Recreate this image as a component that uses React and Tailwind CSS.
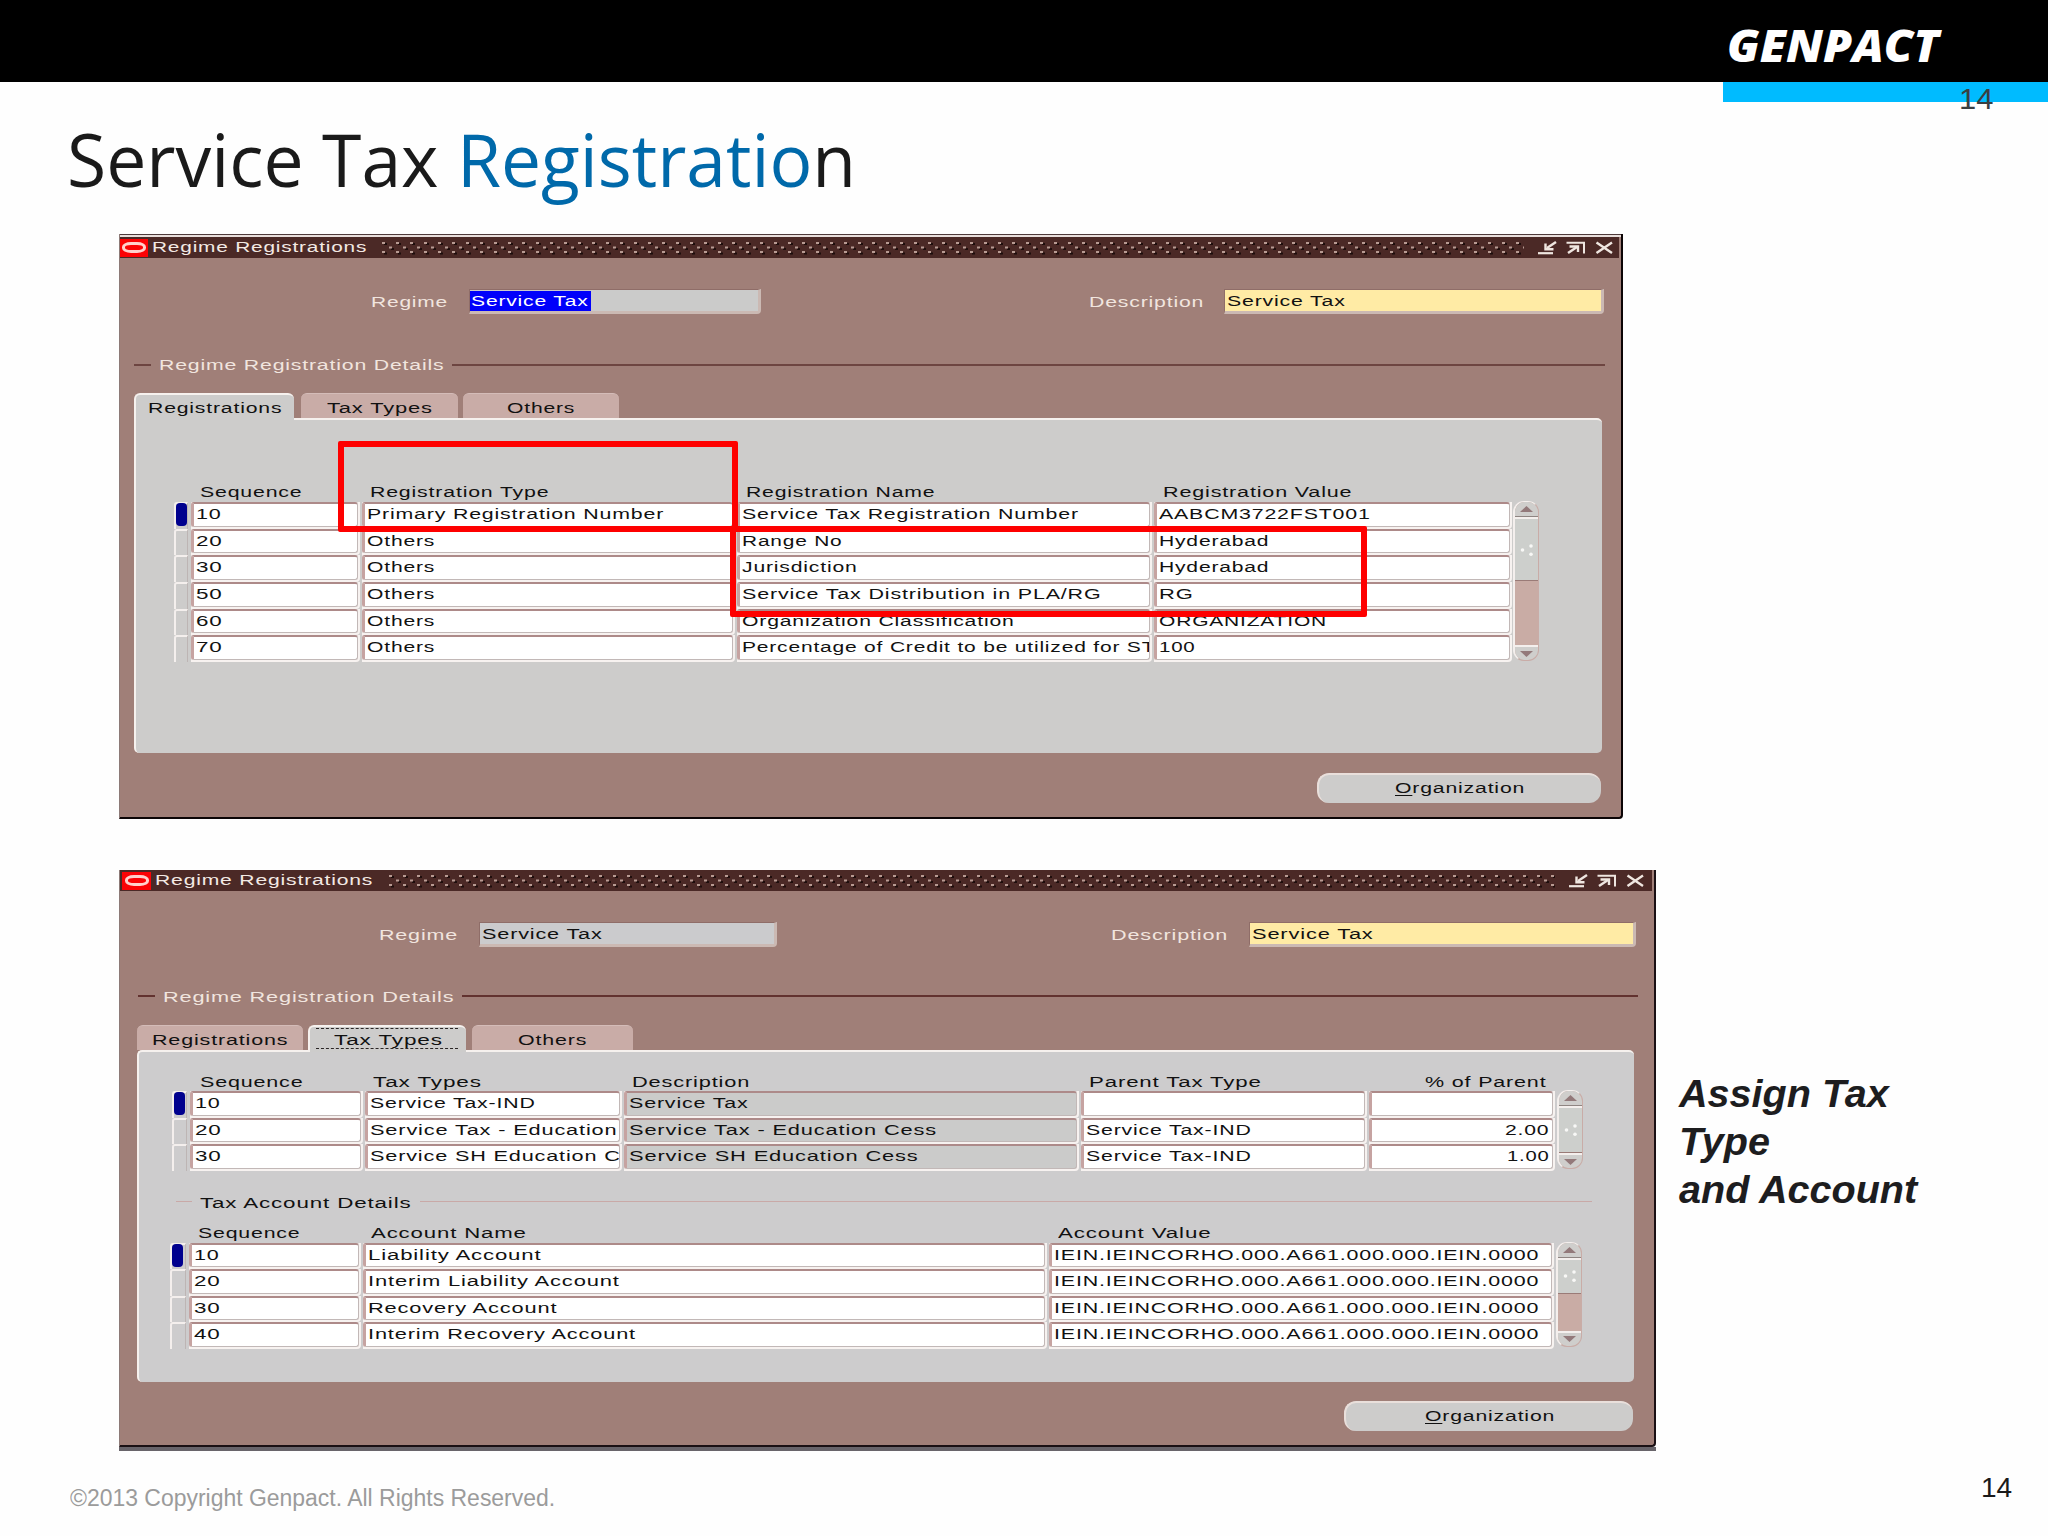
import React, { useLayoutEffect, useRef, useState } from 'react';

// Text stretched horizontally so that it fills exactly w pixels
const Fit = ({ w, origin = 'left', className = '', children }) => {
  const ref = useRef(null);
  const [scale, setScale] = useState(1);

  useLayoutEffect(() => {
    setScale(w / ref.current.offsetWidth);
  }, [w]);

  return (
    <span className="inline-block whitespace-pre align-top shrink-0" style={{ width: w }}>
      <span
        ref={ref}
        className={`inline-block whitespace-pre align-top ${className}`}
        style={{ transform: `scaleX(${scale})`, transformOrigin: origin }}
      >
        {children}
      </span>
    </span>
  );
};

const Label = ({ w, className = '', children }) => (
  <Fit w={w} className={`tracking-[0.6px] ${className}`}>{children}</Fit>
);

const TitleBar = ({ id, textWidth, className, iconClass, dotsClass }) => (
  <div className={`flex items-center h-[21px] bg-[#4b2926] ${className}`}>
    <div className={`h-[18px] bg-[#fb0205] flex items-center justify-center ${iconClass}`}>
      <div className="w-[24px] h-[11px] rounded-[9px/5px] border-[3px] border-[#ffd0cc]" />
    </div>
    <div className="ml-1 text-[#f3e9e4] leading-[20px] h-[21px]">
      <Label w={textWidth}>Regime Registrations</Label>
    </div>
    <svg className={`h-[14px] ${dotsClass}`}>
      <defs>
        <pattern id={id} width="14" height="14" patternUnits="userSpaceOnUse">
          <rect x="2" y="2" width="3" height="2" fill="#1e0d0c" />
          <rect x="9" y="7" width="3" height="2" fill="#1e0d0c" />
          <rect x="2" y="11.5" width="3" height="2" fill="#1e0d0c" />
          <rect x="0" y="1" width="3" height="2" fill="#b89b93" />
          <rect x="7" y="5.5" width="3" height="2" fill="#b89b93" />
          <rect x="0" y="10" width="3" height="2" fill="#b89b93" />
        </pattern>
      </defs>
      <rect width="100%" height="14" fill={`url(#${id})`} />
    </svg>
    <svg className="ml-[14px] w-[77px] h-[14px]" viewBox="0 0 77 14" fill="none" stroke="#efe6e0">
      <path d="M0 12.2h15" strokeWidth="2.2" />
      <path d="M18 1L9 7" strokeWidth="2.4" />
      <path d="M7.500 2.500V8.200H15.500" strokeWidth="2.4" />
      <path d="M28.500 1.800H46V12.500" strokeWidth="2" />
      <path d="M30 12L39 6" strokeWidth="2.4" />
      <path d="M31.500 5.500H40V11" strokeWidth="2.4" />
      <path d="M58.500 1.500L74 12M74 1.500L58.500 12" strokeWidth="2.4" />
    </svg>
  </div>
);

const Field = ({ className, children }) => (
  <div className={`h-[25px] border-t border-l border-t-[#8f6d68] border-l-[#8f6d68] border-r-[3px] border-b-[3px] border-r-[#cbb9b3] border-b-[#cbb9b3] rounded-br-[4px] pl-[2px] pt-[1px] leading-[20px] ${className}`}>
    {children}
  </div>
);

const GroupTitle = ({ w, className, dash, line, text, children }) => (
  <div className={`flex items-center h-5 leading-5 ${className}`}>
    <div className={dash} />
    <div className={`ml-2 mr-2 ${text}`}>
      <Label w={w}>{children}</Label>
    </div>
    <div className={`grow ${line}`} />
  </div>
);

const Tab = ({ active, className, children }) => (
  <div
    className={`rounded-t-[6px] flex justify-center ${
      active
        ? 'relative h-[27px] bg-[#cdcccb] border-t-2 border-l-2 border-[#f6f1ee] leading-[25px]'
        : 'h-[25px] bg-[#c9aca7] border-t border-[#d4bcb8] leading-[27px]'
    } ${className}`}
  >
    {children}
  </div>
);

const Cell = ({ cell, gray, right }) => (
  <div className="mr-[2px] border-r-2 border-b-2 border-[#f7f2f0] rounded-br-[4px] bg-[#ece4e2] min-w-0">
    <div
      className={`h-full border-t-2 border-l-[3px] border-r border-b border-t-[#ad8a89] border-l-[#c6a3a1] border-r-[#c2b8b7] border-b-[#c2b8b7] rounded-[3px] overflow-hidden leading-[20px] ${
        gray ? 'bg-[#cbcbca]' : 'bg-white'
      } ${right ? 'flex justify-end pr-[2px]' : 'pl-[2px]'}`}
    >
      {cell && <Label w={cell[1]}>{cell[0]}</Label>}
    </div>
  </div>
);

const Rows = ({ rows, rowClass, grayCol, rightCol }) => (
  <div>
    {rows.map((row, i) => (
      <div key={i} className={`grid ${rowClass}`}>
        <div className="mr-[3px] border-t-2 border-l-2 border-[#f4efed] border-r border-r-[#bdb5b4] rounded-tl-[3px]">
          {i === 0 && <div className="-mt-[1px] h-[23px] w-[11px] rounded-[4px] bg-[#00008e]" />}
        </div>
        {row.map((cell, j) => (
          <Cell key={j} cell={cell} gray={j === grayCol} right={j === rightCol} />
        ))}
      </div>
    ))}
  </div>
);

const ScrollBar = ({ className, thumb, track = true }) => (
  <div className={`-mt-[1px] flex flex-col w-[26px] rounded-[11px] overflow-hidden border border-l-2 border-[#c9aca7] border-l-[#f4efed] border-t-[#f4efed] bg-[#c9aca5] ${className}`}>
    <div className="h-[15px] shrink-0 bg-[#cfcecc] border-b border-[#8f8582] flex items-center justify-center">
      <svg className="w-[13px] h-[6px]" viewBox="0 0 13 6">
        <path d="M6.500 0L13 6H0z" fill="#93797a" />
      </svg>
    </div>
    <div className={`bg-[#cdcfcc] border-t-2 border-t-[#f4efed] border-b border-b-[#9a7b77] flex items-center justify-center ${thumb}`}>
      <svg className="w-[14px] h-[12px]" viewBox="0 0 14 12" fill="#f8f8f6">
        <circle cx="2.500" cy="6" r="1.800" />
        <circle cx="11" cy="2" r="1.800" />
        <circle cx="11" cy="10.200" r="1.800" />
      </svg>
    </div>
    {track && <div className="grow" />}
    <div className="h-[15px] shrink-0 bg-[#cfcecc] border-t-2 border-[#f4efed] flex items-center justify-center">
      <svg className="w-[13px] h-[6px]" viewBox="0 0 13 6">
        <path d="M0 0H13L6.500 6z" fill="#93797a" />
      </svg>
    </div>
  </div>
);

const OrganizationButton = ({ className }) => (
  <div className={`h-[30px] leading-[26px] rounded-[12px] bg-[#cdcccb] border-t-2 border-l-2 border-[#e9dfdb] flex justify-center ${className}`}>
    <Label w={130}>
      <span className="underline underline-offset-2">O</span>rganization
    </Label>
  </div>
);

const registrations = [
  [['10', 25], ['Primary Registration Number', 297], ['Service Tax Registration Number', 337], ['AABCM3722FST001', 212]],
  [['20', 26], ['Others', 68], ['Range No', 101], ['Hyderabad', 110]],
  [['30', 26], ['Others', 68], ['Jurisdiction', 116], ['Hyderabad', 110]],
  [['50', 26], ['Others', 68], ['Service Tax Distribution in PLA/RG', 360], ['RG', 34]],
  [['60', 26], ['Others', 68], ['Organization Classification', 273], ['ORGANIZATION', 168]],
  [['70', 26], ['Others', 68], ['Percentage of Credit to be utilized for ST', 413], ['100', 37]],
];

const taxTypes = [
  [['10', 25], ['Service Tax-IND', 166], ['Service Tax', 119], null, null],
  [['20', 26], ['Service Tax - Education', 247], ['Service Tax - Education Cess', 308], ['Service Tax-IND', 166], ['2.00', 45]],
  [['30', 26], ['Service SH Education C', 250], ['Service SH Education Cess', 289], ['Service Tax-IND', 166], ['1.00', 43]],
];

const accountValue = ['IEIN.IEINCORHO.000.A661.000.000.IEIN.0000', 485];

const accounts = [
  [['10', 25], ['Liability Account', 173], accountValue],
  [['20', 26], ['Interim Liability Account', 252], accountValue],
  [['30', 26], ['Recovery Account', 190], accountValue],
  [['40', 26], ['Interim Recovery Account', 268], accountValue],
];

const RegistrationsWindow = () => (
  <div className="relative ml-[119px] w-[1504px] h-[585px] bg-[#a07f78] border-r-2 border-b-2 border-[#0c0506] border-l border-l-[#8d7a77] rounded-br-[4px]">
    <div className="h-[3px] bg-[#e9dfdc] border-t border-t-[#4d3a3a]" />
    <TitleBar id="dots-registrations" textWidth={215} className="w-[1499px]" iconClass="w-[28px]" dotsClass="ml-[15px] w-[1142px]" />

    <div className="flex mt-[31px] h-[25px]">
      <div className="ml-[251px] text-[#f1e5df] leading-[26px]">
        <Label w={77}>Regime</Label>
      </div>
      <Field className="ml-[21px] w-[292px] bg-[#cbcbca] flex">
        <div className="-ml-[2px] pl-[1px] h-5 w-[121px] bg-[#0000fb] text-white">
          <Label w={117}>Service Tax</Label>
        </div>
      </Field>
      <div className="ml-[328px] text-[#f1e5df] leading-[26px]">
        <Label w={115}>Description</Label>
      </div>
      <Field className="ml-[20px] w-[380px] bg-[#ffeba5]">
        <Label w={118}>Service Tax</Label>
      </Field>
    </div>

    <GroupTitle
      w={285}
      className="mt-[41px] ml-[14px] w-[1471px]"
      dash="w-[17px] h-[2px] bg-[#6d4541]"
      line="h-[2px] bg-[#6d4541]"
      text="text-[#f1e5df]"
    >
      Regime Registration Details
    </GroupTitle>

    <div className="mt-[18px] ml-[14px] h-[25px] flex">
      <Tab active className="w-[160px]"><Label w={134}>Registrations</Label></Tab>
      <Tab className="ml-[7px] w-[157px]"><Label w={106}>Tax Types</Label></Tab>
      <Tab className="ml-[5px] w-[156px]"><Label w={68}>Others</Label></Tab>
    </div>

    <div className="ml-[14px] w-[1468px] h-[335px] bg-[#cdcccb] border-t-2 border-l-2 border-[#f6f1ee] rounded-[5px] rounded-tl-none pt-[62px] pl-[38px]">
      <div className="grid grid-cols-[17px_171px_375px_417px_360px] h-5 leading-5">
        <div className="col-start-2 pl-[9px]"><Label w={103}>Sequence</Label></div>
        <div className="pl-2"><Label w={180}>Registration Type</Label></div>
        <div className="pl-[9px]"><Label w={190}>Registration Name</Label></div>
        <div className="pl-[9px]"><Label w={189}>Registration Value</Label></div>
      </div>
      <div className="flex">
        <Rows rows={registrations} rowClass="grid-cols-[17px_171px_375px_417px_360px] h-[26.7px]" />
        <ScrollBar className="-ml-[1px] h-[160px]" thumb="h-[64px]" />
      </div>
    </div>

    <OrganizationButton className="mt-5 ml-[1197px] w-[284px]" />

    {/* callouts */}
    <div className="absolute left-[218px] top-[207px] w-[400px] h-[91px] border-[6px] border-[#fe0000] rounded-[2px]" />
    <div className="absolute left-[610px] top-[292px] w-[637px] h-[91px] border-[6px] border-[#fe0000] rounded-[2px]" />
  </div>
);

const TaxTypesWindow = () => (
  <div className="ml-[119px] w-[1537px] border-b-4 border-[#68646a]">
    <div className="h-[577px] bg-[#a07f78] border-r-2 border-b-2 border-[#1a1014] border-l border-l-[#8d7a77] rounded-br-[4px]">
      <TitleBar id="dots-tax-types" textWidth={218} className="w-[1532px]" iconClass="ml-[2px] w-[29px]" dotsClass="ml-[16px] w-[1166px]" />

      <div className="flex mt-[31px] h-[25px]">
        <div className="ml-[259px] text-[#f1e5df] leading-[25px]">
          <Label w={79}>Regime</Label>
        </div>
        <Field className="ml-[21px] w-[298px] bg-[#cbcbcd]">
          <Label w={120}>Service Tax</Label>
        </Field>
        <div className="ml-[334px] text-[#f1e5df] leading-[25px]">
          <Label w={117}>Description</Label>
        </div>
        <Field className="ml-[21px] w-[387px] bg-[#ffeba5]">
          <Label w={121}>Service Tax</Label>
        </Field>
      </div>

      <GroupTitle
        w={291}
        className="mt-[39px] ml-[18px] w-[1500px]"
        dash="w-[17px] h-[2px] bg-[#62322f]"
        line="h-[2px] bg-[#62322f]"
        text="text-[#f1e5df] pt-[2px]"
      >
        Regime Registration Details
      </GroupTitle>

      <div className="mt-[19px] ml-[17px] h-[25px] flex">
        <Tab className="w-[166px]"><Label w={136}>Registrations</Label></Tab>
        <Tab active className="ml-[5px] w-[158px]">
          <Label w={109}>Tax Types</Label>
          <div className="absolute left-[6px] right-[8px] top-[1px] h-[21px] border-y border-dashed border-[#2b2626]" />
        </Tab>
        <Tab className="ml-[6px] w-[161px]"><Label w={69}>Others</Label></Tab>
      </div>

      <div className="ml-[17px] w-[1497px] h-[332px] bg-[#cdcccd] border-t-2 border-l-2 border-[#f6f1ee] rounded-[5px] pt-[20px] pl-[33px]">
        <div className="grid grid-cols-[18px_175px_259px_457px_288px_188px] h-[19px] leading-[19px]">
          <div className="col-start-2 pl-[10px]"><Label w={104}>Sequence</Label></div>
          <div className="pl-[8px]"><Label w={109}>Tax Types</Label></div>
          <div className="pl-[8px]"><Label w={118}>Description</Label></div>
          <div className="pl-[8px]"><Label w={172}>Parent Tax Type</Label></div>
          <div className="flex justify-end pr-[10px]"><Label w={122}>% of Parent</Label></div>
        </div>
        <div className="flex">
          <Rows
            rows={taxTypes}
            rowClass="grid-cols-[18px_175px_259px_457px_288px_188px] h-[26.5px]"
            grayCol={2}
            rightCol={4}
          />
          <ScrollBar className="h-[79px]" thumb="grow" track={false} />
        </div>

        <GroupTitle
          w={212}
          className="mt-[21px] ml-[4px] w-[1416px]"
          dash="w-4 h-[1px] bg-[#c9a9a7]"
          line="h-[1px] bg-[#c9a9a7]"
          text="pt-[2px]"
        >
          Tax Account Details
        </GroupTitle>

        <div className="-ml-[2px] mt-[11px] grid grid-cols-[19px_174px_686px_507px] h-5 leading-5">
          <div className="col-start-2 pl-[9px]"><Label w={103}>Sequence</Label></div>
          <div className="pl-[8px]"><Label w={156}>Account Name</Label></div>
          <div className="pl-[9px]"><Label w={154}>Account Value</Label></div>
        </div>
        <div className="-ml-[2px] flex">
          <Rows rows={accounts} rowClass="grid-cols-[19px_174px_686px_507px] h-[26.5px]" />
          <ScrollBar className="h-[105px]" thumb="h-[36px]" />
        </div>
      </div>

      <OrganizationButton className="mt-[19px] ml-[1224px] w-[289px]" />
    </div>
  </div>
);

const App = () => {
  return (
    <main className="w-[2048px] h-[1536px] overflow-hidden bg-[#fefefe] text-[#111] text-[15.5px] font-['Liberation_Sans',Arial,sans-serif]">
      <header>
        <div className="h-[82px] bg-black flex justify-end pr-[109px] text-white text-[43.5px] leading-[92px] font-extrabold italic font-['Open_Sans',sans-serif]">
          <Fit w={212}>GENPACT</Fit>
        </div>
        <div className="ml-[1723px] h-5 bg-[#00bbff] pl-[236px] text-[30px] leading-[33px] text-[#3a3f42]">
          <Fit w={34}>14</Fit>
        </div>
      </header>

      <h1 className="h-[132px] pl-[67px] text-[74px] leading-[114px] text-[#1a1a1a] font-['Open_Sans',sans-serif] flex">
        <Fit w={390}>Service Tax </Fit>
        <Fit w={399}>
          <span className="text-[#0069aa]">Registratio</span>n
        </Fit>
      </h1>

      <RegistrationsWindow />

      <div className="mt-[51px] flex">
        <TaxTypesWindow />
        <div className="ml-[23px] mt-[199px] text-[39.6px] leading-[48px] font-bold italic text-[#1d1d1f]">
          <p>Assign Tax</p>
          <p>Type</p>
          <p>and Account</p>
        </div>
      </div>

      <footer className="mt-[20px] pl-[70px] pr-[36px] flex justify-between">
        <div className="mt-[10px] text-[23px] leading-[34px] text-[#9b9b9b]">
          <Fit w={485}>©2013 Copyright Genpact. All Rights Reserved.</Fit>
        </div>
        <div className="text-[28px] leading-[34px] text-[#1a1a1a]">
          <Fit w={31}>14</Fit>
        </div>
      </footer>
    </main>
  );
};

export default App;
